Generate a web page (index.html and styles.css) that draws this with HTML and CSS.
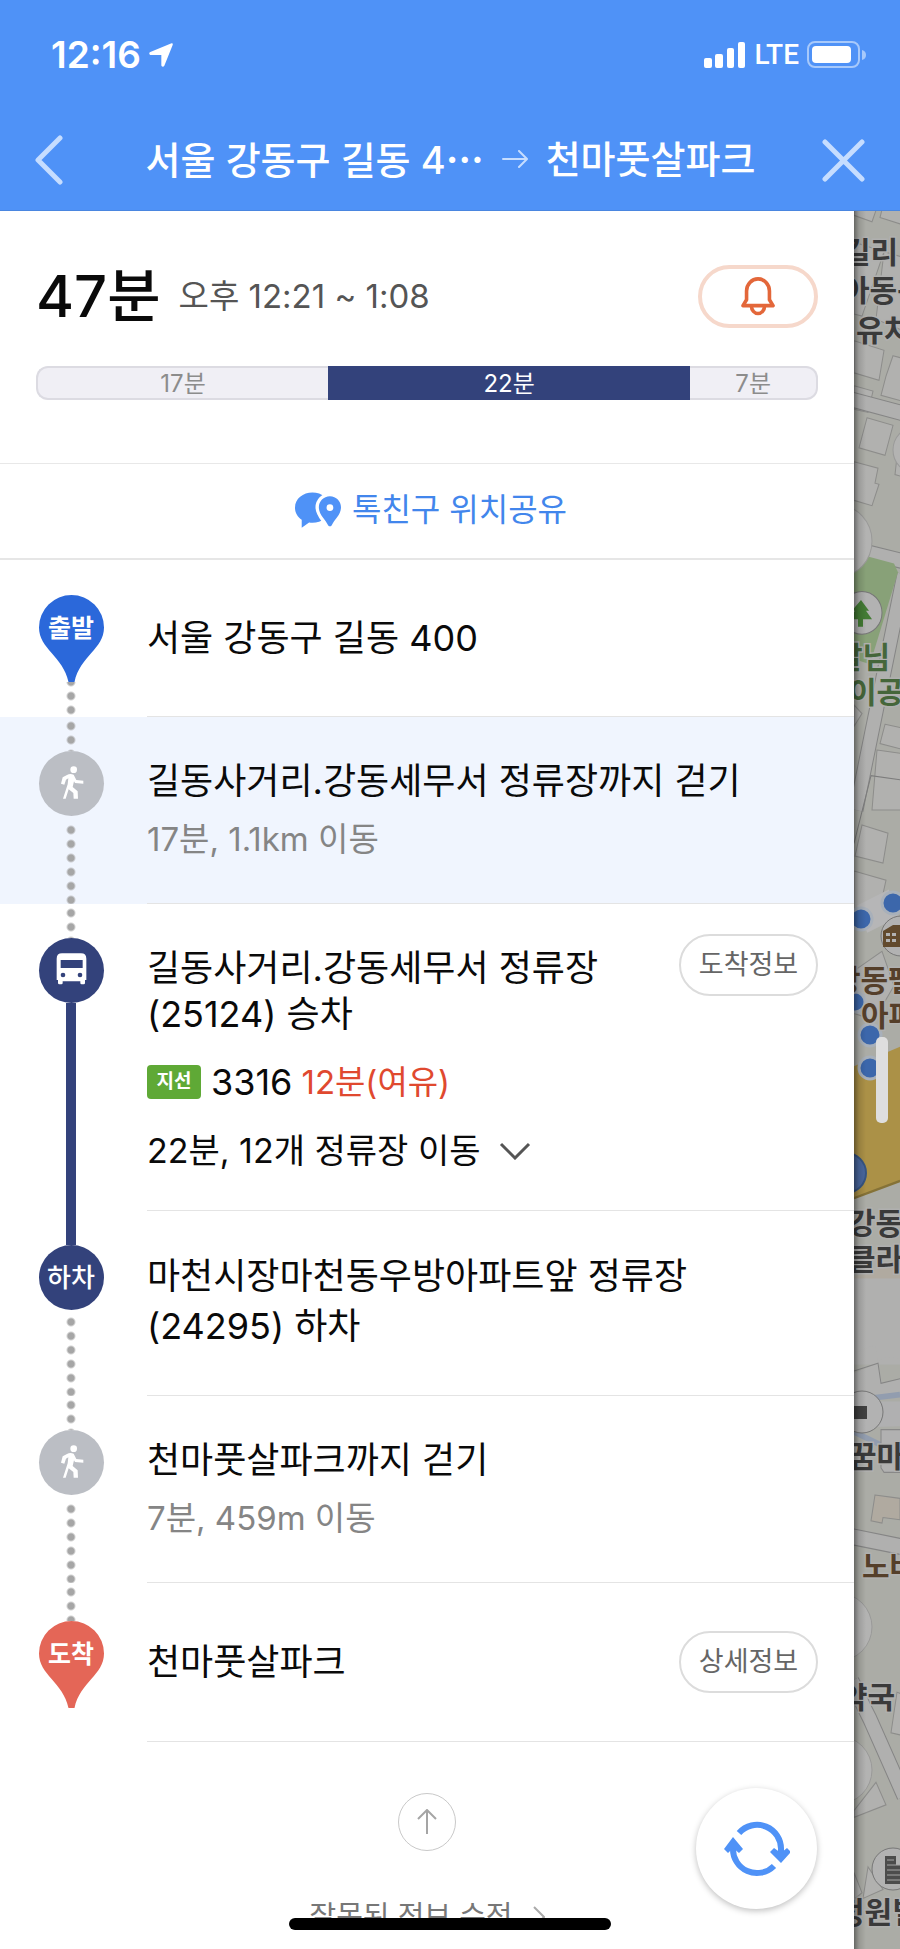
FILE: index.html
```html
<!DOCTYPE html>
<html lang="ko">
<head>
<meta charset="utf-8">
<meta name="viewport" content="width=device-width, initial-scale=1">
<title>길찾기 상세</title>
<link rel="stylesheet" href="styles.css">
</head>
<body>
<header class="topbar">
  <div class="status">
    <div class="status-left">
      <span class="clock">12:16</span>
      <svg class="loc" viewBox="0 0 72 72" aria-hidden="true"><path d="M68 1c3 0 4 2 3 5L46 68c-2 5-9 4-9-1V36H6c-6 0-7-7-2-9L64 2z" fill="#fff"/></svg>
    </div>
    <div class="status-right">
      <svg class="signal" viewBox="0 0 42 26" aria-hidden="true" fill="#fff"><rect x="0" y="16" width="8" height="10" rx="2"/><rect x="11" y="12" width="8" height="14" rx="2"/><rect x="23" y="6" width="7" height="20" rx="2"/><rect x="34" y="0" width="7" height="26" rx="2"/></svg>
      <span class="net">LTE</span>
      <svg class="battery" viewBox="0 0 60 28" aria-hidden="true"><rect x="1" y="1" width="51" height="25" rx="7" fill="none" stroke="#a7c9fb" stroke-width="2"/><rect x="5" y="5" width="39" height="17" rx="4" fill="#fff"/><path d="M55 9q4 1 4 5t-4 5z" fill="#a7c9fb"/></svg>
    </div>
  </div>
  <nav class="titlebar">
    <button class="icon-btn" type="button" aria-label="뒤로">
      <svg class="back-ico" viewBox="0 0 28 50" aria-hidden="true"><path d="M25 3 3 25l22 22" fill="none" stroke="#c6ddff" stroke-width="5" stroke-linecap="round" stroke-linejoin="round"/></svg>
    </button>
    <h1 class="route"><span>서울 강동구 길동 4<span class="dots">⋯</span></span><svg class="to" viewBox="0 0 26 18" aria-hidden="true"><path d="M1 9h23M17 1l8 8-8 8" fill="none" stroke="#c6ddff" stroke-width="2" stroke-linecap="round" stroke-linejoin="round"/></svg><span>천마풋살파크</span></h1>
    <button class="icon-btn" type="button" aria-label="닫기">
      <svg class="close-ico" viewBox="0 0 43 43" aria-hidden="true"><path d="m3 3 37 37M40 3 3 40" stroke="#c6ddff" stroke-width="5" stroke-linecap="round"/></svg>
    </button>
  </nav>
</header>

<main class="stage">
  <section class="panel">
    <div class="summary">
      <div class="summary-top">
        <p class="total">47분</p>
        <p class="span">오후 12:21 ~ 1:08</p>
        <button class="alarm" type="button" aria-label="알림">
          <svg class="bell" viewBox="0 0 104 118" aria-hidden="true" fill="none" stroke="#e3673a" stroke-width="11" stroke-linejoin="round"><path d="M6 87 17 69V42a35 37 0 0 1 70 0v27l11 18z"/><path d="M32 89a20 22 0 0 0 40 0"/></svg>
        </button>
      </div>
      <div class="bar">
        <span class="seg seg-first">17분</span>
        <span class="seg seg-bus">22분</span>
        <span class="seg seg-last">7분</span>
      </div>
    </div>

    <button class="share" type="button">
      <svg class="share-ico" viewBox="0 0 137 106" aria-hidden="true"><path d="M52 1c28 0 52 18 52 45S80 91 52 91q-5 0-10-1L20 106V82C8 74 0 62 0 46 0 19 24 1 52 1z" fill="#4f92f7"/><path d="M104 12c19 0 33 15 33 33 0 22-20 37-28 54q-5 5-10 0C91 82 71 67 71 45c0-18 14-33 33-33z" fill="#4f92f7" stroke="#fff" stroke-width="20" paint-order="stroke"/><circle cx="104" cy="46" r="10" fill="#fff"/></svg>
      <span>톡친구 위치공유</span>
    </button>

    <ol class="steps">
      <li class="step step-end step-start">
        <div class="rail">
          <span class="gap-pin"></span>
          <div class="pin">
            <svg viewBox="0 0 65 87" aria-hidden="true"><path d="M32.500 0A32.500 32.500 0 0 1 65 32.500C65 54 41 61 35.500 87h-6C24 61 0 54 0 32.500A32.500 32.500 0 0 1 32.500 0z" fill="#2b68da"/></svg>
            <span class="pin-label">출발</span>
          </div>
          <span class="line dotted fill"></span>
        </div>
        <div class="body"><h2 class="name">서울 강동구 길동 400</h2></div>
      </li>

      <li class="step current">
        <div class="rail">
          <span class="line dotted lead"></span>
          <span class="mark grey"><svg viewBox="0 0 195 195" aria-hidden="true"><use href="#walker"/></svg></span>
          <span class="line dotted fill spaced"></span>
        </div>
        <div class="body">
          <h2 class="name">길동사거리.강동세무서 정류장까지 걷기</h2>
          <p class="sub">17분, 1.1km 이동</p>
        </div>
      </li>

      <li class="step">
        <div class="rail">
          <span class="line dotted lead"></span>
          <span class="mark navy"><svg viewBox="0 0 195 195" aria-hidden="true"><path d="M53 62q0-16 16-16h57q16 0 16 16v64h-4v9q0 4-4 4h-6q-4 0-4-4v-5H71v5q0 4-4 4h-6q-4 0-4-4v-9h-4z" fill="#fff"/><path d="M65 66h66v24H65z" fill="#33427b"/><circle cx="72" cy="111" r="7" fill="#33427b"/><circle cx="123" cy="111" r="7" fill="#33427b"/></svg></span>
          <span class="line solid fill"></span>
        </div>
        <div class="body body-bus">
          <div class="name-row">
            <h2 class="name">길동사거리.강동세무서 정류장<br>(25124) 승차</h2>
            <button class="pill" type="button">도착정보</button>
          </div>
          <p class="bus"><span class="badge">지선</span><span class="num">3316</span><span class="eta">12분(여유)</span></p>
          <button class="stops" type="button"><span>22분, 12개 정류장 이동</span><svg class="chev" viewBox="0 0 32 18" aria-hidden="true"><path d="m2 2 14 14L30 2" fill="none" stroke="#555" stroke-width="3"/></svg></button>
        </div>
      </li>

      <li class="step">
        <div class="rail">
          <span class="line solid lead"></span>
          <span class="mark navy">하차</span>
          <span class="line dotted fill spaced"></span>
        </div>
        <div class="body body-off"><h2 class="name loose">마천시장마천동우방아파트앞 정류장<br>(24295) 하차</h2></div>
      </li>

      <li class="step">
        <div class="rail">
          <span class="line dotted lead"></span>
          <span class="mark grey"><svg viewBox="0 0 195 195" aria-hidden="true"><use href="#walker"/></svg></span>
          <span class="line dotted fill spaced"></span>
        </div>
        <div class="body">
          <h2 class="name">천마풋살파크까지 걷기</h2>
          <p class="sub">7분, 459m 이동</p>
        </div>
      </li>

      <li class="step step-end">
        <div class="rail">
          <span class="line dotted lead lead-long"></span>
          <div class="pin">
            <svg viewBox="0 0 65 87" aria-hidden="true"><path d="M32.500 0A32.500 32.500 0 0 1 65 32.500C65 54 41 61 35.500 87h-6C24 61 0 54 0 32.500A32.500 32.500 0 0 1 32.500 0z" fill="#e46657"/></svg>
            <span class="pin-label">도착</span>
          </div>
        </div>
        <div class="body">
          <div class="name-row centered">
            <h2 class="name">천마풋살파크</h2>
            <button class="pill" type="button">상세정보</button>
          </div>
        </div>
      </li>
    </ol>

    <footer class="foot">
      <button class="up" type="button" aria-label="맨 위로"><svg viewBox="0 0 20 26" aria-hidden="true"><path d="M10 25V2M1 10l9-9 9 9" fill="none" stroke="#a5a5a5" stroke-width="2"/></svg></button>
      <a class="fix" href="#">잘못된 정보 수정<svg viewBox="0 0 12 22" aria-hidden="true"><path d="m1 1 10 10L1 21" fill="none" stroke="#aaa" stroke-width="2"/></svg></a>
    </footer>

    <button class="refresh" type="button" aria-label="새로고침">
      <svg viewBox="0 0 66 64" aria-hidden="true"><path d="M15 16A24 24 0 0 1 57 33v7M50 49A24 24 0 0 1 9 31v-4" fill="none" stroke="#4f92f7" stroke-width="6"/><path d="m46 35 4-4 7 5 6-5 4 4-10 11zM0 32 9 20l10 12-4 4-6-5-5 5z" fill="#4f92f7"/></svg>
    </button>
  </section>

  <aside class="map" aria-label="지도">
    <svg class="map-art" viewBox="854 211 46 1738" preserveAspectRatio="xMinYMin slice">
      <rect x="854" y="211" width="200" height="1738" fill="#abaca6"/>
      <g transform="translate(0 -15) scale(1 1.0714)">
        <path d="M854 215l18 6 6-16h-24zM880 217l30 9v-20h-27zM854 240l30 9-22 60-8-2zM884 249l30 8v70l-38-15zM854 332l30 9-5 28-25-7zM893 346l20 5v40l-32-8 5-18zM854 374l19 5-5 20-14-3zM867 404l26 7-8 28-26-7zM854 445l24 6-3 14 4 1-7 20-18-5zM897 440h10v20l-12-3zM854 672l8 8-8 12zM885 690l20 4v20l-25-6zM877 714l30 4v52h-35z" fill="#b1b1af" stroke="#8d8d8b"/>
        <path d="M852 387l52 13M852 526l52 12M904 550l-48 220" fill="none" stroke="#858585" stroke-width="15"/>
        <path d="M852 387l52 13M852 526l52 12M904 550l-48 220" fill="none" stroke="#b0b0af" stroke-width="13"/>
        <path d="M854 530l40 10 4 8-28 86-16-5z" fill="#88a178"/>
        <g fill="#b3b3b2" stroke="#9a9a99"><circle cx="839" cy="519" r="33"/><circle cx="914" cy="434" r="21"/></g>
        <circle cx="862" cy="586" r="20" fill="#b2b2b2" stroke="#777"/>
        <path d="m861 574 8 10h-3l6 8h-9v7h-5v-7h-9l6-8h-3z" fill="#437b34"/>
      </g>
      <g transform="translate(0 -114) scale(1 1.148)">
        <path d="M862 818l26 7-5 26-28-6zM854 858l32 8-8 32-24-2zM854 945l28-17 12 30-20 30-20-6z" fill="#b1b1af" stroke="#8d8d8b"/>
        <path d="M854 834l17-59 33 4" fill="none" stroke="#7c7c7c"/>
        <path d="M854 1028l46-17v117l-46 15z" fill="#ab9147"/>
        <path d="M854 1143l46-15" stroke="#857237" stroke-width="2"/>
        <path d="M854 1211l46-12v26l-42 13z" fill="#b0aaa0"/>
        <path d="M852 1253q25-6 50-13" fill="none" stroke="#858585" stroke-width="18"/>
        <path d="M852 1253q25-6 50-13" fill="none" stroke="#b0b0af" stroke-width="16"/>
        <path d="M854 1266l46-12v34h-46z" fill="#b0b0af"/>
        <path d="M862 900l32-14" stroke="#b6b6b7" stroke-width="26"/>
      </g>
      <g fill="#3c67ab" stroke="#a8b0ba" stroke-width="3"><circle cx="861" cy="919" r="11"/><circle cx="893" cy="903" r="11"/><circle cx="855" cy="1002" r="10"/><circle cx="870" cy="1035" r="11"/><circle cx="870" cy="1068" r="11"/></g>
      <circle cx="846" cy="1173" r="20" fill="#49679e" stroke="#365583" stroke-width="2"/>
      <circle cx="901" cy="936" r="20" fill="#b2b2b2" stroke="#777"/>
      <path d="M883 931l10-6h10v22h-20zM886 933h4v3h-4zm6 0h4v3h-4zm-6 6h4v3h-4zm6 0h4v3h-4z" fill="#624a2d" fill-rule="evenodd"/>
      <g transform="translate(0 -173) scale(1 1.127)">
        <path d="M854 1288h50v71l-20-1-6 3-3-14-21 7zM854 1372l24-9 4 18 18-4v14h-46z" fill="#b0b0af"/>
        <path d="M854 1370l24-7 3 18 23-5" fill="none" stroke="#858585"/>
        <path d="M875 1480l25 3v19l-17-2-1 5-11-2z" fill="#b0aaa0" stroke="#8d8d8b"/>
        <path d="M854 1760l22-25 10 20-32 11zM897 1655l8 3v36l-14-3zM854 1815l8 18-8 6zM868 1810l15 20-20 8z" fill="#b1b1af" stroke="#8d8d8b"/>
        <path d="M852 1517l50 9M852 1645q10 20 18 34l34 68" fill="none" stroke="#858585" stroke-width="15"/>
        <path d="M852 1517l50 9M852 1645q10 20 18 34l34 68" fill="none" stroke="#b0b0af" stroke-width="13"/>
        <path d="M854 1396l46-5M854 1424l46 20" stroke="#929daf" stroke-width="5"/>
        <path d="M874 1397h26v22l-36 1z" fill="#b0b0b1"/>
        <path d="M881 1422h22v38h-19l-3-4z" fill="#b1b1b1" stroke="#888"/>
      </g>
      <g fill="#b3b3b2" stroke="#9a9a99"><circle cx="838" cy="1627" r="34"/><circle cx="838" cy="1770" r="34"/></g>
      <circle cx="862" cy="1412" r="21" fill="#b2b2b2" stroke="#777"/>
      <path d="M854 1406h13v13h-13z" fill="#404040"/>
      <circle cx="893" cy="1869" r="21" fill="#b2b2b2" stroke="#777"/>
      <path d="M885 1856h11v28h-11zm11 9h6v19h-6z" fill="#4c4c4c"/>
      <path d="M887 1860h7m-7 5h13m-13 5h13m-13 5h13m-13 5h13" stroke="#a5a5a5"/>
      <g class="map-text">
        <text x="843" y="263">길리</text><text x="842" y="301">아동복</text><text x="856" y="341">유치원</text>
        <text x="835" y="668" class="green">달님</text><text x="849" y="703" class="green">이공원</text>
        <text x="833" y="991" class="brown">강동팰</text><text x="861" y="1026" class="brown">아파</text>
        <text x="848" y="1234">강동</text><text x="848" y="1270">클라</text><text x="849" y="1467">꿈마</text>
        <text x="862" y="1577" class="brown">노바</text><text x="840" y="1708">약국</text><text x="837" y="1923">정원빌</text>
      </g>
    </svg>
    <span class="handle"></span>
  </aside>
</main>
<div class="home"></div>

<svg class="defs" aria-hidden="true"><defs><g id="walker"><circle cx="104" cy="56" r="10" fill="#fff"/><path d="M84 72q9-6 20-1l8 16 21 2v9l-25-2-3-5-4 17 15 13 1 22h-13l-1-17-14-11-9 28H72l14-43 2-18-7 4-5 15-10-3 5-19z" fill="#fff"/></g></defs></svg>
</body>
</html>
```
FILE: styles.css
```css
* { box-sizing: border-box; }
body, h1, h2, p, ol { margin: 0; padding: 0; }
body {
  display: flex;
  flex-direction: column;
  min-height: 100vh;
  position: relative;
  background: #fff;
  color: #0a0a0a;
  font-family: Inter, "Noto Sans CJK KR", sans-serif;
  font-weight: 400;
}
h1, h2 { font-weight: 400; }
button { font: inherit; color: inherit; background: none; border: 0; padding: 0; cursor: pointer; }
svg { display: block; flex: none; }
ol { list-style: none; }
.defs { position: absolute; width: 0; height: 0; }

/* top bar */
.topbar { background: #4f92f7; color: #fff; border-bottom: 1px solid #4a86e0; }
.status { display: flex; justify-content: space-between; align-items: center; height: 110px; padding: 0 33px 0 51px; }
.status-left, .status-right { display: flex; align-items: center; gap: 8px; }
.clock { font-size: 37px; font-weight: 600; line-height: 40px; }
.loc { width: 24px; height: 24px; }
.signal { width: 42px; height: 26px; }
.net { font-size: 28px; font-weight: 500; font-family: Roboto, sans-serif; line-height: 32px; }
.battery { width: 60px; height: 28px; }
.titlebar { display: flex; align-items: center; justify-content: space-between; height: 100px; padding: 0 34px 0 35px; }
.icon-btn { display: flex; align-items: center; min-width: 44px; height: 60px; }
.back-ico { width: 28px; height: 50px; }
.close-ico { width: 43px; height: 43px; }
.route { display: flex; align-items: center; gap: 18px; font-size: 38px; font-weight: 500; line-height: 48px; padding-bottom: 2px; white-space: nowrap; }
.dots { font-family: "Noto Sans CJK KR", sans-serif; font-weight: 700; }
.to { width: 26px; height: 18px; }

/* layout */
.stage { flex: 1; display: grid; grid-template-columns: minmax(0, 1fr) 46px; }
.panel { position: relative; display: flex; flex-direction: column; background: #fff; }

/* summary */
.summary { padding: 53px 36px 63px; }
.summary-top { display: flex; align-items: center; }
.total { font-size: 58px; font-weight: 500; line-height: 64px; }
.span { flex: 1; margin-left: 18px; font-size: 33px; line-height: 40px; color: #555; }
.alarm { display: flex; align-items: center; justify-content: center; width: 120px; height: 63px; border: 4px solid #f6d8cb; border-radius: 32px; }
.bell { width: 34px; height: 39px; }
.bar { display: flex; height: 34px; margin-top: 38px; font-size: 24px; line-height: 31px; text-align: center; color: #8c8c8c; }
.seg { background: #f0eff5; border: 2px solid #dcdbe2; }
.seg-first { flex: 293; border-right: 0; border-radius: 12px 0 0 12px; }
.seg-bus { flex: 362; background: #33427b; border-color: #33427b; color: #fff; }
.seg-last { flex: 127; border-left: 0; border-radius: 0 12px 12px 0; }

.share { display: flex; align-items: center; justify-content: center; gap: 11px; height: 97px; padding: 0 0 2px 8px; border-top: 1px solid #e8e8e8; border-bottom: 2px solid #e6e6e6; color: #4286ec; font-size: 32px; line-height: 40px; }
.share-ico { width: 46px; height: 36px; }

/* steps */
.step { display: flex; align-items: stretch; }
.step-end { min-height: 159px; }
.step-start { min-height: 157px; }
.current { background: #f0f5fe; }
.rail { flex: none; display: flex; flex-direction: column; align-items: center; width: 142px; }
.body { flex: 1; margin-left: 5px; padding: 41px 36px 44px 0; border-bottom: 1px solid #e4e4e4; }
.body-bus { padding-bottom: 36px; }
.body-off { padding-top: 40px; }
.step-end .body { display: flex; align-items: center; padding-top: 0; padding-bottom: 0; }
.gap-pin { height: 35px; }
.line { display: block; width: 10px; }
.lead { height: 34px; }
.lead-long { height: 38px; }
.fill { flex: 1; }
.spaced { margin-top: 5px; }
.solid { background: #33427b; }
.dotted { background-image: radial-gradient(circle at 5px 7px, #a6a6a6 3px, transparent 5px); background-size: 10px 14px; background-position: 0 2px; }
.dotted.fill { background-position: left bottom -3px; }
.step-start .dotted { background-position: left bottom; }
.mark { display: flex; align-items: center; justify-content: center; width: 65px; height: 65px; border-radius: 50%; color: #fff; font-size: 26px; font-weight: 500; line-height: 30px; }
.mark svg { width: 65px; height: 65px; }
.grey { background: #bbbec4; }
.navy { background: #33427b; }
.pin { position: relative; width: 65px; height: 87px; }
.pin svg { width: 65px; height: 87px; }
.pin-label { position: absolute; inset: 16px 0 auto; text-align: center; color: #fff; font-size: 25px; font-weight: 700; line-height: 34px; }
.name { font-size: 36px; line-height: 46px; }
.loose { line-height: 50px; }
.sub { margin-top: 15px; font-size: 33px; line-height: 40px; color: #858585; }
.name-row { display: flex; align-items: flex-start; justify-content: space-between; width: 100%; }
.centered { align-items: center; }
.pill { flex: none; height: 62px; width: 139px; border: 2px solid #dcdcdc; border-radius: 31px; font-size: 27px; line-height: 36px; color: #666; }
.name-row:not(.centered) .pill { margin-top: -11px; }
.bus { display: flex; align-items: center; margin-top: 22px; line-height: 46px; font-size: 36px; }
.badge { width: 54px; height: 34px; border-radius: 4px; background: #5fa936; color: #fff; font-size: 19px; font-weight: 700; line-height: 33px; text-align: center; }
.num { margin-left: 10px; }
.eta { margin-left: 9px; font-size: 33px; color: #e0492f; }
.stops { display: flex; align-items: center; gap: 19px; margin-top: 23px; font-size: 34px; line-height: 46px; }
.chev { width: 32px; height: 18px; }

/* footer */
.foot { display: flex; flex-direction: column; align-items: center; padding: 51px 0 11px; }
.up { display: flex; align-items: center; justify-content: center; width: 58px; height: 58px; border: 1px solid #c9c9c9; border-radius: 50%; }
.up svg { width: 20px; height: 26px; }
.fix { display: flex; align-items: center; gap: 20px; margin-top: 47px; font-size: 29px; line-height: 38px; color: #777; text-decoration: none; }
.fix svg { width: 12px; height: 22px; }
.refresh { position: absolute; right: 37px; bottom: 40px; display: flex; align-items: center; justify-content: center; width: 121px; height: 121px; border-radius: 50%; background: #fff; box-shadow: 0 2px 6px rgba(0, 0, 0, .25); }
.refresh svg { width: 66px; height: 64px; }

/* map strip */
.map { position: relative; overflow: hidden; background: #abaca6; }
.map-art { position: absolute; inset: 0; width: 100%; height: 100%; }
.map::after { content: ""; position: absolute; inset: 0; background: linear-gradient(90deg, rgba(0, 0, 0, .4), rgba(0, 0, 0, .12) 5px, transparent 12px); }
.map-text { font-size: 30px; font-weight: 700; font-family: "Noto Sans CJK KR", sans-serif; fill: #3a3a3a; stroke: #b0b0af; stroke-width: 3px; paint-order: stroke; }
.map-text .green { fill: #45663a; }
.map-text .brown { fill: #553f2a; }
.handle { position: absolute; z-index: 1; left: 22px; top: 826px; width: 12px; height: 86px; border-radius: 5px; background: #dedede; }

.home { position: absolute; left: 50%; bottom: 19px; width: 322px; height: 12px; margin-left: -161px; border-radius: 6px; background: #000; }
```
